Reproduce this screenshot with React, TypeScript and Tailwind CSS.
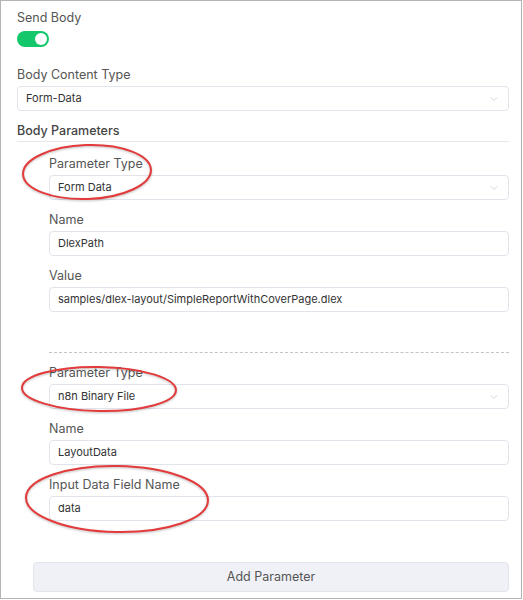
import { ChevronDown } from "lucide-react";

function Label({ text, bold }: { text: string; bold?: boolean }) {
  return (
    <div
      className={`h-[18px] text-[12.5px] leading-[18px] ${bold ? "font-medium text-[#444]" : "text-[#555]"}`}
    >
      {text}
    </div>
  );
}

function Field({ value, select }: { value: string; select?: boolean }) {
  return (
    <div className="mt-[2px] flex h-[25px] items-center justify-between rounded-[4px] border border-[#e1e4eb] bg-white pl-[8px] pr-[8px] text-[11px] text-[#333]">
      <span className="truncate">{value}</span>
      {select && <ChevronDown className="h-3 w-3 text-[#bcbfc6]" strokeWidth={1.25} />}
    </div>
  );
}

function Ellipse({ cx, cy, rx, ry, rot = 0 }: { cx: number; cy: number; rx: number; ry: number; rot?: number }) {
  return (
    <ellipse
      cx={cx}
      cy={cy}
      rx={rx}
      ry={ry}
      transform={`rotate(${rot} ${cx} ${cy})`}
      fill="none"
      stroke="#e33b3b"
      strokeWidth={2}
    />
  );
}

export default function App() {
  return (
    <div
      className="relative h-[599px] w-[522px] border border-[#b4b4b4] bg-white pl-4 pr-3 pt-[8px]"
      style={{ fontFamily: "Inter, 'Open Sans', sans-serif" }}
    >
      <Label text="Send Body" />
      <div className="mt-1 flex h-4 w-8 items-center justify-end rounded-full bg-[#13c76a] pr-[2px]">
        <div className="h-3 w-3 rounded-full bg-white" />
      </div>

      <div className="mt-[19px]">
        <Label text="Body Content Type" />
        <Field value="Form-Data" select />
      </div>

      <div className="mt-[11px] border-b border-[#e6e8ee] pb-[1px]">
        <Label text="Body Parameters" bold />
      </div>

      <div className="pl-8">
        <div className="mt-[13px]">
          <Label text="Parameter Type" />
          <Field value="Form Data" select />
        </div>
        <div className="mt-[11px]">
          <Label text="Name" />
          <Field value="DlexPath" />
        </div>
        <div className="mt-[11px]">
          <Label text="Value" />
          <Field value="samples/dlex-layout/SimpleReportWithCoverPage.dlex" />
        </div>

        <div className="mt-[40px] border-t border-dashed border-[#c4c4c4]" />

        <div className="mt-[11px]">
          <Label text="Parameter Type" />
          <Field value="n8n Binary File" select />
        </div>
        <div className="mt-[11px]">
          <Label text="Name" />
          <Field value="LayoutData" />
        </div>
        <div className="mt-[11px]">
          <Label text="Input Data Field Name" />
          <Field value="data" />
        </div>
      </div>

      <div className="ml-4 mt-[41px] flex h-[30px] items-center justify-center rounded-[4px] border border-[#e2e4ec] bg-[#f0f1f6] text-[12.5px] text-[#555]">
        Add Parameter
      </div>

      <svg
        className="pointer-events-none absolute left-[-1px] top-[-1px]"
        width={523}
        height={600}
        style={{ filter: "drop-shadow(0 1px 1px rgba(0,0,0,0.25))" }}
      >
        <Ellipse cx={87} cy={172} rx={64} ry={27} rot={-2} />
        <Ellipse cx={99} cy={389} rx={77} ry={22} rot={1} />
        <Ellipse cx={117} cy={499} rx={91} ry={33} rot={1} />
      </svg>
    </div>
  );
}
